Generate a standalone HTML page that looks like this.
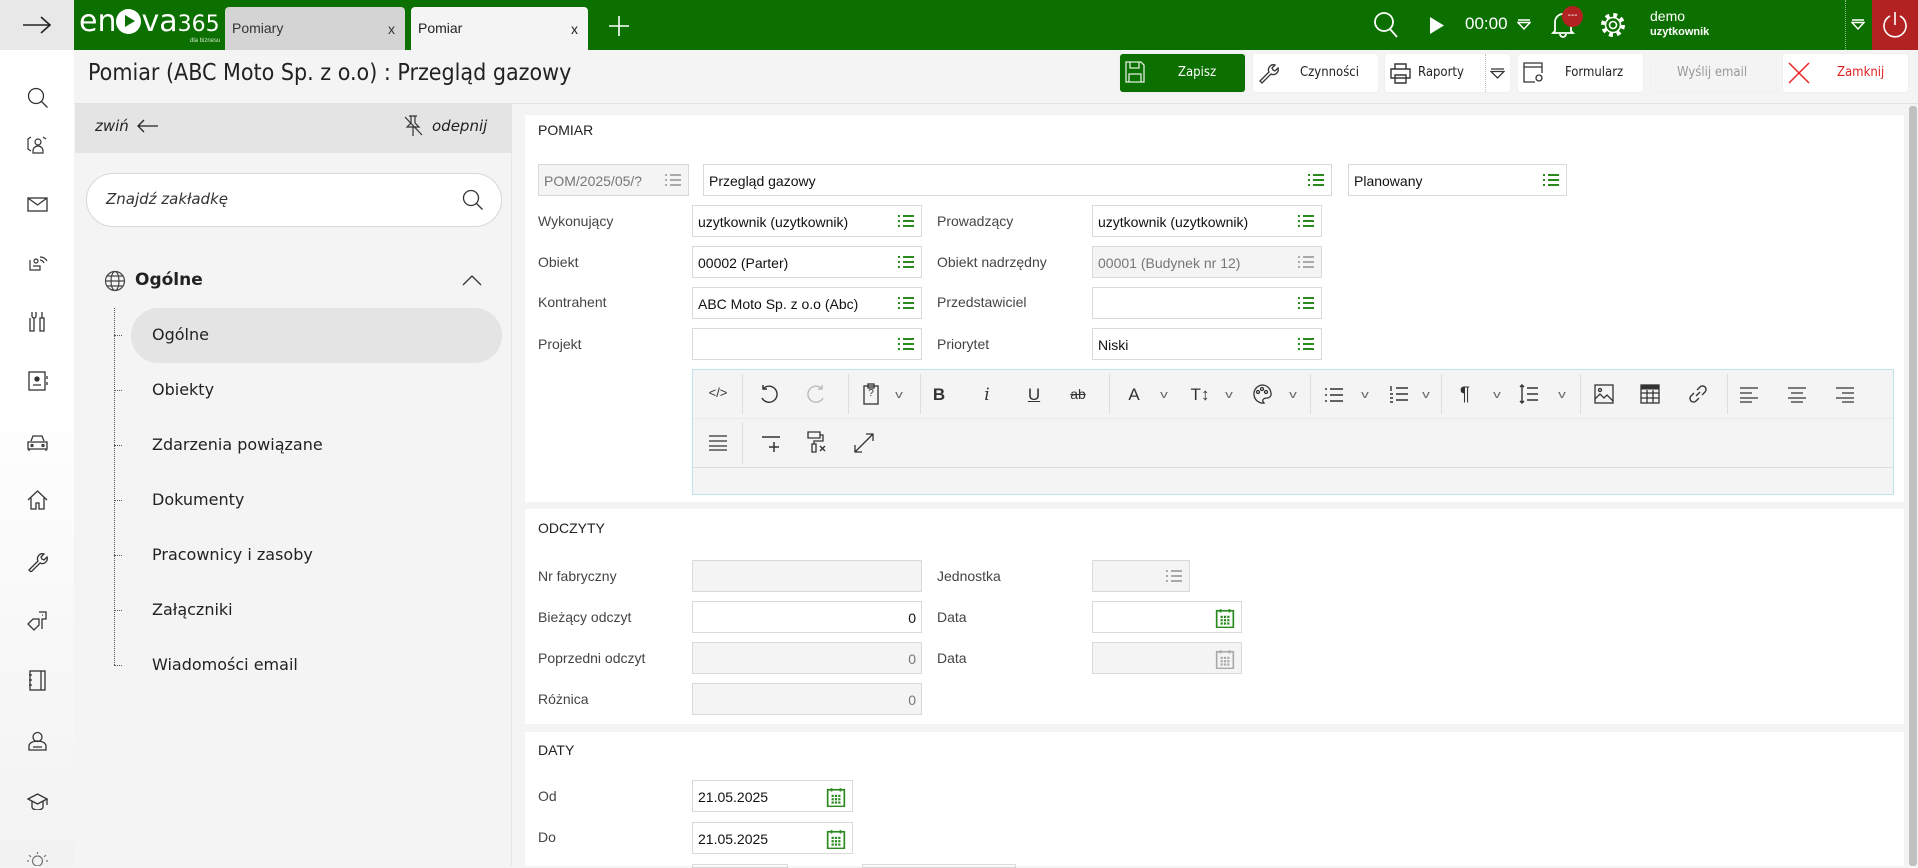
<!DOCTYPE html>
<html><head><meta charset="utf-8">
<style>
*{box-sizing:border-box;margin:0;padding:0}
body{width:1918px;height:866px;overflow:hidden;background:#f4f4f4;font-family:"Liberation Sans",sans-serif;position:relative;color:#222}
.a{position:absolute}
.hdr{left:0;top:0;width:1918px;height:50px;background:#0b7000}
.tab{top:7px;height:43px;border-radius:4px 4px 0 0;font-size:14px;padding:13px 0 0 7px}
.tab span{position:absolute;right:10px;top:14px;font-size:14px}
.btn{top:54px;height:38px;background:#fff;border-radius:3px;font-size:14px;box-shadow:0 0 2px rgba(0,0,0,.05)}
.btn .t{position:absolute;top:11px;font-family:"DejaVu Sans Condensed","Liberation Sans",sans-serif;font-size:13px}
.card{background:#fff;left:525px;width:1379px}
.lbl{font-size:14px;color:#444}
.f{height:32px;border:1px solid #d9d9d9;background:#fff;font-size:14px;padding:8px 5px;color:#111;white-space:nowrap}
.f.d{background:#f4f4f4;color:#777}
.li{position:absolute;right:6px;top:8px;width:18px;height:14px}
.nav{font-family:"DejaVu Sans","Liberation Sans",sans-serif;font-size:16px;color:#222}
.tb{position:absolute;font-size:17px;color:#333;transform:translateX(-50%)}
.sep{position:absolute;width:1px;background:#ddd}
.car{position:absolute;font-size:11px;color:#666;transform:translateX(-50%) scaleX(1.4)}
</style></head><body>
<svg width="0" height="0" style="position:absolute"><defs>
<symbol id="lst" viewBox="0 0 18 14"><g stroke-width="2"><path d="M1 2h2M1 7h2M1 12h2"/><path d="M6 2h11M6 7h11M6 12h11"/></g></symbol>
<symbol id="cal" viewBox="0 0 18 18"><rect x="1.5" y="2.5" width="15" height="15" fill="none" stroke-width="1.5"/><path d="M5 1v3M13 1v3" stroke-width="1.5"/><g stroke="none"><rect x="5" y="7" width="2" height="2"/><rect x="8" y="7" width="2" height="2"/><rect x="11" y="7" width="2" height="2"/><rect x="5" y="10" width="2" height="2"/><rect x="8" y="10" width="2" height="2"/><rect x="11" y="10" width="2" height="2"/><rect x="5" y="13" width="2" height="2"/><rect x="8" y="13" width="2" height="2"/><rect x="11" y="13" width="2" height="2"/></g></symbol>
</defs></svg>

<!-- header -->
<div class="a hdr"></div>
<div class="a" style="left:0;top:0;width:74px;height:50px;background:#e8e8e8"></div>
<svg class="a" style="left:22px;top:15px" width="30" height="20" viewBox="0 0 30 20"><path d="M1 10h27M19 2l9 8-9 8" fill="none" stroke="#222" stroke-width="1.6"/></svg>
<div class="a" style="left:79px;top:4px;color:#fff;font-size:30px;letter-spacing:0px;font-family:'DejaVu Sans',sans-serif">en<span style="display:inline-block;width:25px;height:25px;border-radius:50%;background:#fff;vertical-align:-3px;position:relative"><span style="position:absolute;left:9px;top:6px;border-left:10px solid #0b7000;border-top:6.5px solid transparent;border-bottom:6.5px solid transparent"></span></span>va<span style="font-size:22px">365</span></div>
<div class="a" style="left:190px;top:38px;color:#cfe6cc;font-size:6px">dla biznesu</div>
<div class="a tab" style="left:225px;width:180px;background:#d4d4d4;color:#333">Pomiary<span>x</span></div>
<div class="a tab" style="left:411px;width:177px;background:#f4f4f4;color:#222">Pomiar<span>x</span></div>
<svg class="a" style="left:609px;top:16px" width="20" height="20"><path d="M10 0v20M0 10h20" stroke="#fff" stroke-width="1.6"/></svg>
<svg class="a" style="left:1373px;top:11px" width="26" height="28"><circle cx="11" cy="11" r="9" fill="none" stroke="#fff" stroke-width="1.8"/><path d="M17 18l7 8" stroke="#fff" stroke-width="1.8"/></svg>
<svg class="a" style="left:1429px;top:17px" width="16" height="17"><path d="M1 0l14 8.5L1 17z" fill="#fff"/></svg>
<div class="a" style="left:1465px;top:14px;color:#fff;font-size:17px">00:00</div>
<svg class="a" style="left:1517px;top:19px" width="14" height="11"><path d="M1 1h12M1 3.5h12L7 10z" fill="none" stroke="#fff" stroke-width="1.4"/></svg>
<svg class="a" style="left:1551px;top:10px" width="24" height="28"><path d="M4 21V12a8 8 0 0 1 16 0v9l2 2H2zM9 24a3 3 0 0 0 6 0" fill="none" stroke="#fff" stroke-width="1.8"/></svg>
<div class="a" style="left:1562px;top:6px;width:21px;height:21px;border-radius:50%;background:#b22222;color:#fff;font-size:10px;text-align:center;line-height:19px">---</div>
<svg class="a" style="left:1600px;top:12px" width="26" height="26" viewBox="0 0 26 26"><circle cx="13" cy="13" r="10" fill="none" stroke="#fff" stroke-width="4" stroke-dasharray="3.9 3.95"/><circle cx="13" cy="13" r="7.5" fill="#0b7000" stroke="#fff" stroke-width="1.6"/><circle cx="13" cy="13" r="3.5" fill="none" stroke="#fff" stroke-width="1.6"/></svg>
<div class="a" style="left:1650px;top:8px;color:#fff;font-size:14px">demo</div>
<div class="a" style="left:1650px;top:26px;color:#fff;font-size:11px;font-weight:bold">uzytkownik</div>
<div class="a" style="left:1845px;top:0;height:50px;border-left:1px dotted #8bbf85"></div>
<svg class="a" style="left:1851px;top:19px" width="14" height="11"><path d="M1 1h12M1 3.5h12L7 10z" fill="none" stroke="#fff" stroke-width="1.4"/></svg>
<div class="a" style="left:1872px;top:0;width:46px;height:50px;background:#b22222"></div>
<svg class="a" style="left:1881px;top:10px" width="28" height="30"><path d="M9 6a11 11 0 1 0 10 0" fill="none" stroke="#fff" stroke-width="1.6"/><path d="M14 2v13" stroke="#fff" stroke-width="1.6"/></svg>

<!-- left icon bar -->
<div class="a" style="left:0;top:50px;width:74px;height:816px;background:linear-gradient(#fff 40%,#f2f2f2)"></div>
<svg class="a" style="left:26px;top:86px" width="24" height="24"><circle cx="10" cy="10" r="7.5" fill="none" stroke="#333" stroke-width="1.3"/><path d="M15.5 15.5l6 6" stroke="#333" stroke-width="1.3"/></svg>
<svg class="a" style="left:27px;top:134px" width="22" height="20" fill="none" stroke="#333" stroke-width="1.2"><path d="M4 3L1 5v10l3 2M11 5a3 3 0 1 1 0 6 3 3 0 1 1 0-6M6 19v-2a5 5 0 0 1 10 0v2zM16 3l3 2"/></svg>
<svg class="a" style="left:27px;top:197px" width="21" height="15" fill="none" stroke="#333" stroke-width="1.3"><rect x="1" y="1" width="19" height="13"/><path d="M1 1l9.5 7L20 1"/></svg>
<svg class="a" style="left:27px;top:252px" width="22" height="20" fill="none" stroke="#333" stroke-width="1.2"><path d="M13 5a8 8 0 0 1 7 4M13 8a5 5 0 0 1 4 3M3 8v10h10v-4H6M7 9a2 2 0 1 1 0 .1"/></svg>
<svg class="a" style="left:29px;top:311px" width="18" height="22" fill="none" stroke="#333" stroke-width="1.3"><path d="M3 1v4a2 2 0 0 0 4 0V1M5 7v13h-4V7M13 1v6M11 7h4v13h-4z"/></svg>
<svg class="a" style="left:28px;top:371px" width="20" height="20" fill="none" stroke="#333" stroke-width="1.3"><rect x="1" y="1" width="16" height="18"/><circle cx="9" cy="8" r="2" fill="#333"/><path d="M5 14h8M19 5v3M19 11v3"/></svg>
<svg class="a" style="left:27px;top:434px" width="21" height="17" fill="none" stroke="#333" stroke-width="1.3"><path d="M4 7l2-5h9l2 5M1 8h19v7H1zM2 15v2M19 15v2"/><circle cx="5" cy="11.5" r="1"/><circle cx="16" cy="11.5" r="1"/></svg>
<svg class="a" style="left:27px;top:490px" width="21" height="20" fill="none" stroke="#333" stroke-width="1.3"><path d="M1 10L10.5 1 20 10M4 8v11h5v-6h3v6h5V8"/></svg>
<svg class="a" style="left:27px;top:551px" width="21" height="21" fill="none" stroke="#333" stroke-width="1.3"><path d="M2 19l9-9a5 5 0 0 1 6-7l-3 3 1 2 2 1 3-3a5 5 0 0 1-7 6l-9 9z"/></svg>
<svg class="a" style="left:27px;top:610px" width="21" height="21" fill="none" stroke="#333" stroke-width="1.3"><path d="M1 14l5-5h6v6l-5 5zM12 2h7v7h-4v10M15 5h1"/></svg>
<svg class="a" style="left:29px;top:670px" width="17" height="21" fill="none" stroke="#333" stroke-width="1.3"><rect x="1" y="1" width="15" height="19"/><path d="M12 1v19M0 5h3M0 10h3M0 15h3"/></svg>
<svg class="a" style="left:28px;top:731px" width="19" height="20" fill="none" stroke="#333" stroke-width="1.3"><circle cx="9.5" cy="6" r="4.5"/><path d="M1 19v-4a8.5 5 0 0 1 17 0v4zM5 16h9"/></svg>
<svg class="a" style="left:27px;top:793px" width="21" height="17" fill="none" stroke="#333" stroke-width="1.3"><path d="M1 6L10.5 1 20 6l-9.5 5zM5 8v6a5.5 3 0 0 0 11 0V8M20 6v6"/></svg>
<svg class="a" style="left:27px;top:851px" width="21" height="15" fill="none" stroke="#777" stroke-width="1.2"><circle cx="10.5" cy="10" r="5"/><path d="M10.5 1v2M2 4l2 2M19 4l-2 2M0 10h2M19 10h2"/></svg>

<!-- title bar -->
<div class="a" style="left:74px;top:50px;width:1844px;height:54px;background:#f4f4f4;border-bottom:1px solid #e2e2e2"></div>
<div class="a" style="left:88px;top:60px;font-size:23px;color:#222;font-family:'DejaVu Sans Condensed','Liberation Sans',sans-serif">Pomiar (ABC Moto Sp. z o.o) : Przegląd gazowy</div>
<div class="a btn" style="left:1120px;width:125px;background:#0b7000"><svg class="a" style="left:5px;top:7px" width="20" height="22" fill="none" stroke="#dfeedd" stroke-width="1.3"><path d="M1 1h15l3 3v17H1zM5 1v6h9V1M4 21v-8h12v8"/></svg><span class="t" style="left:58px;color:#fff">Zapisz</span></div>
<div class="a btn" style="left:1253px;width:125px"><svg class="a" style="left:5px;top:8px" width="22" height="22" fill="none" stroke="#333" stroke-width="1.3"><path d="M2 19l9-9a5 5 0 0 1 6-7l-3 3 1 2 2 1 3-3a5 5 0 0 1-7 6l-9 9z"/></svg><span class="t" style="left:47px">Czynności</span></div>
<div class="a btn" style="left:1385px;width:125px"><svg class="a" style="left:5px;top:9px" width="21" height="21" fill="none" stroke="#333" stroke-width="1.4"><path d="M5 6V1h11v5M1 6h19v9H1zM5 12h11v8H5z"/></svg><span class="t" style="left:33px">Raporty</span><div class="a" style="left:100px;top:0;height:38px;border-left:1px dotted #bbb"></div><svg class="a" style="left:105px;top:14px" width="15" height="11"><path d="M1 1h13M1 3.5h13L7.5 10z" fill="none" stroke="#333" stroke-width="1.3"/></svg></div>
<div class="a btn" style="left:1518px;width:125px"><svg class="a" style="left:5px;top:8px" width="22" height="22" fill="none" stroke="#333" stroke-width="1.3"><path d="M12 20H1V1h18v10M1 5h18"/><circle cx="16" cy="16" r="3"/></svg><span class="t" style="left:47px">Formularz</span></div>
<div class="a btn" style="left:1651px;width:125px;background:#f4f4f4"><span class="t" style="left:26px;color:#999">Wyślij email</span></div>
<div class="a btn" style="left:1783px;width:125px"><svg class="a" style="left:4px;top:7px" width="24" height="24"><path d="M2 2l20 20M22 2L2 22" stroke="#e22" stroke-width="1.5"/></svg><span class="t" style="left:54px;color:#e02020">Zamknij</span></div>

<!-- tab navigator -->
<div class="a" style="left:75px;top:104px;width:437px;height:762px;background:#f4f4f4;border-right:1px solid #e6e6e6"></div>
<div class="a" style="left:75px;top:104px;width:437px;height:49px;background:#e4e4e4"></div>
<div class="a nav" style="left:95px;top:117px;font-style:italic;font-size:15px">zwiń</div>
<svg class="a" style="left:137px;top:119px" width="22" height="14"><path d="M21 7H1M7 1L1 7l6 6" fill="none" stroke="#222" stroke-width="1.3"/></svg>
<svg class="a" style="left:403px;top:115px" width="20" height="22" fill="none" stroke="#333" stroke-width="1.2"><path d="M6 1h8M8 1v7l-4 4h12l-4-4V1M10 12v9M2 2l17 18"/></svg>
<div class="a nav" style="left:432px;top:117px;font-style:italic;font-size:15px">odepnij</div>
<div class="a" style="left:86px;top:173px;width:416px;height:54px;border:1px solid #d8d8d8;border-radius:27px;background:#fff"></div>
<div class="a nav" style="left:106px;top:190px;font-style:italic;font-size:15px;color:#333">Znajdź zakładkę</div>
<svg class="a" style="left:462px;top:189px" width="22" height="22"><circle cx="9" cy="9" r="7.5" fill="none" stroke="#333" stroke-width="1.3"/><path d="M14.5 14.5l6 6" stroke="#333" stroke-width="1.3"/></svg>
<svg class="a" style="left:104px;top:270px" width="22" height="22" fill="none" stroke="#444" stroke-width="1.2"><circle cx="11" cy="11" r="9.5"/><ellipse cx="11" cy="11" rx="4" ry="9.5"/><path d="M1.5 11h19M3 6h16M3 16h16"/></svg>
<div class="a nav" style="left:135px;top:270px;font-weight:bold;font-size:17px">Ogólne</div>
<svg class="a" style="left:462px;top:274px" width="20" height="12"><path d="M1 11l9-9 9 9" fill="none" stroke="#333" stroke-width="1.3"/></svg>
<div class="a" style="left:114px;top:308px;height:357px;border-left:1px dotted #555"></div>
<div class="a" style="left:131px;top:308px;width:371px;height:55px;background:#e4e4e4;border-radius:28px"></div>
<div class="a" style="left:114px;top:335px;width:8px;border-top:1px dotted #555"></div>
<div class="a" style="left:114px;top:390px;width:8px;border-top:1px dotted #555"></div>
<div class="a" style="left:114px;top:445px;width:8px;border-top:1px dotted #555"></div>
<div class="a" style="left:114px;top:500px;width:8px;border-top:1px dotted #555"></div>
<div class="a" style="left:114px;top:555px;width:8px;border-top:1px dotted #555"></div>
<div class="a" style="left:114px;top:610px;width:8px;border-top:1px dotted #555"></div>
<div class="a" style="left:114px;top:665px;width:8px;border-top:1px dotted #555"></div>
<div class="a nav" style="left:152px;top:325px">Ogólne</div>
<div class="a nav" style="left:152px;top:380px">Obiekty</div>
<div class="a nav" style="left:152px;top:435px">Zdarzenia powiązane</div>
<div class="a nav" style="left:152px;top:490px">Dokumenty</div>
<div class="a nav" style="left:152px;top:545px">Pracownicy i zasoby</div>
<div class="a nav" style="left:152px;top:600px">Załączniki</div>
<div class="a nav" style="left:152px;top:655px">Wiadomości email</div>

<!-- scrollbar -->
<div class="a" style="left:1908px;top:104px;width:10px;height:762px;background:#f4f4f4"></div>
<div class="a" style="left:1909px;top:106px;width:8px;height:760px;background:#c1c1c1;border-radius:3px"></div>

<!-- POMIAR card -->
<div class="a card" style="top:115px;height:387px"></div>
<div class="a" style="left:538px;top:122px;font-size:14px">POMIAR</div>
<div class="a f d" style="left:538px;top:164px;width:151px">POM/2025/05/?<svg class="li" stroke="#aaa"><use href="#lst"/></svg></div>
<div class="a f" style="left:703px;top:164px;width:629px">Przegląd gazowy<svg class="li" stroke="#2a8a1e"><use href="#lst"/></svg></div>
<div class="a f" style="left:1348px;top:164px;width:219px">Planowany<svg class="li" stroke="#2a8a1e"><use href="#lst"/></svg></div>

<div class="a lbl" style="left:538px;top:213px">Wykonujący</div>
<div class="a f" style="left:692px;top:205px;width:230px">uzytkownik (uzytkownik)<svg class="li" stroke="#2a8a1e"><use href="#lst"/></svg></div>
<div class="a lbl" style="left:937px;top:213px">Prowadzący</div>
<div class="a f" style="left:1092px;top:205px;width:230px">uzytkownik (uzytkownik)<svg class="li" stroke="#2a8a1e"><use href="#lst"/></svg></div>

<div class="a lbl" style="left:538px;top:254px">Obiekt</div>
<div class="a f" style="left:692px;top:246px;width:230px">00002 (Parter)<svg class="li" stroke="#2a8a1e"><use href="#lst"/></svg></div>
<div class="a lbl" style="left:937px;top:254px">Obiekt nadrzędny</div>
<div class="a f d" style="left:1092px;top:246px;width:230px">00001 (Budynek nr 12)<svg class="li" stroke="#aaa"><use href="#lst"/></svg></div>

<div class="a lbl" style="left:538px;top:294px">Kontrahent</div>
<div class="a f" style="left:692px;top:287px;width:230px">ABC Moto Sp. z o.o (Abc)<svg class="li" stroke="#2a8a1e"><use href="#lst"/></svg></div>
<div class="a lbl" style="left:937px;top:294px">Przedstawiciel</div>
<div class="a f" style="left:1092px;top:287px;width:230px"><svg class="li" stroke="#2a8a1e"><use href="#lst"/></svg></div>

<div class="a lbl" style="left:538px;top:336px">Projekt</div>
<div class="a f" style="left:692px;top:328px;width:230px"><svg class="li" stroke="#2a8a1e"><use href="#lst"/></svg></div>
<div class="a lbl" style="left:937px;top:336px">Priorytet</div>
<div class="a f" style="left:1092px;top:328px;width:230px">Niski<svg class="li" stroke="#2a8a1e"><use href="#lst"/></svg></div>

<!-- editor -->
<div class="a" style="left:692px;top:369px;width:1202px;height:126px;border:1px solid #bfe3ea;background:#f4f4f4"></div>
<div class="a" style="left:693px;top:418px;width:1200px;border-top:1px solid #eaeaea"></div>
<div class="a" style="left:693px;top:467px;width:1200px;border-top:1px solid #ddd"></div>
<div class="sep" style="left:742px;top:374px;height:40px"></div>
<div class="sep" style="left:848px;top:374px;height:40px"></div>
<div class="sep" style="left:920px;top:374px;height:40px"></div>
<div class="sep" style="left:1109px;top:374px;height:40px"></div>
<div class="sep" style="left:1310px;top:374px;height:40px"></div>
<div class="sep" style="left:1441px;top:374px;height:40px"></div>
<div class="sep" style="left:1580px;top:374px;height:40px"></div>
<div class="sep" style="left:1727px;top:374px;height:40px"></div>
<div class="sep" style="left:742px;top:422px;height:42px"></div>
<div class="tb" style="left:718px;top:385px;font-size:13px">&lt;/&gt;</div>
<svg class="a" style="left:758px;top:384px" width="20" height="20" fill="none" stroke="#333" stroke-width="1.4"><path d="M5 5a8 8 0 1 1 -1 9M5 1v4h4"/></svg>
<svg class="a" style="left:807px;top:384px" width="20" height="20" fill="none" stroke="#bbb" stroke-width="1.4"><path d="M15 5a8 8 0 1 0 1 9M15 1v4h-4"/></svg>
<svg class="a" style="left:863px;top:383px" width="16" height="22" fill="none" stroke="#333" stroke-width="1.3"><rect x="1" y="3" width="14" height="18"/><rect x="5" y="1" width="6" height="4"/></svg>
<div class="tb" style="left:871px;top:388px;font-size:10px">?</div>
<div class="car" style="left:899px;top:389px">v</div>
<div class="tb" style="left:939px;top:385px;font-weight:bold">B</div>
<div class="tb" style="left:987px;top:385px;font-style:italic;font-family:'DejaVu Serif',serif">i</div>
<div class="tb" style="left:1034px;top:385px;text-decoration:underline">U</div>
<div class="tb" style="left:1078px;top:386px;font-size:14px;text-decoration:line-through">ab</div>
<div class="tb" style="left:1134px;top:385px">A</div>
<div class="car" style="left:1164px;top:389px">v</div>
<div class="tb" style="left:1200px;top:385px">T↕</div>
<div class="car" style="left:1229px;top:389px">v</div>
<svg class="a" style="left:1252px;top:384px" width="20" height="20" fill="none" stroke="#333" stroke-width="1.3"><path d="M10 1a9 9 0 1 0 2 18c-3-3 0-5 3-5a4 4 0 0 0 4-5 9 9 0 0 0-9-8z"/><circle cx="6" cy="8" r="1.5"/><circle cx="10" cy="5" r="1.5"/><circle cx="14" cy="8" r="1.5"/></svg>
<div class="car" style="left:1293px;top:389px">v</div>
<svg class="a" style="left:1324px;top:387px" width="20" height="16" stroke="#333" stroke-width="1.4"><path d="M1 2h2M1 8h2M1 14h2M6 2h13M6 8h13M6 14h13"/></svg>
<div class="car" style="left:1365px;top:389px">v</div>
<svg class="a" style="left:1389px;top:385px" width="20" height="18" stroke="#333" stroke-width="1.4"><path d="M2 1v5M1 9h3M1 13h3M1 17h3M7 3h12M7 9h12M7 15h12"/></svg>
<div class="car" style="left:1426px;top:389px">v</div>
<div class="tb" style="left:1465px;top:384px;font-size:19px">¶</div>
<div class="car" style="left:1497px;top:389px">v</div>
<svg class="a" style="left:1519px;top:384px" width="20" height="20" stroke="#333" stroke-width="1.4" fill="none"><path d="M3 1v18M1 3l2-2 2 2M1 17l2 2 2-2M8 4h11M8 10h11M8 16h11"/></svg>
<div class="car" style="left:1562px;top:389px">v</div>
<svg class="a" style="left:1594px;top:384px" width="20" height="20" fill="none" stroke="#333" stroke-width="1.3"><rect x="1" y="1" width="18" height="18"/><path d="M1 15l5-5 4 4 3-3 6 6"/><circle cx="6" cy="6" r="1.5"/></svg>
<svg class="a" style="left:1640px;top:384px" width="20" height="20" fill="none" stroke="#333" stroke-width="1.3"><rect x="1" y="1" width="18" height="18"/><path d="M1 3.5h18" stroke-width="4"/><path d="M1 9h18M1 14h18M7 6v13M13 6v13"/></svg>
<svg class="a" style="left:1688px;top:384px" width="20" height="20" fill="none" stroke="#333" stroke-width="1.4"><path d="M8 12l4-4M9 6l3-3a3 3 0 0 1 5 5l-3 3M11 14l-3 3a3 3 0 0 1-5-5l3-3"/></svg>
<svg class="a" style="left:1739px;top:387px" width="20" height="16" stroke="#333" stroke-width="1.3"><path d="M1 1h18M1 6h12M1 11h18M1 15h12"/></svg>
<svg class="a" style="left:1787px;top:387px" width="20" height="16" stroke="#333" stroke-width="1.3"><path d="M1 1h18M4 6h12M1 11h18M4 15h12"/></svg>
<svg class="a" style="left:1835px;top:387px" width="20" height="16" stroke="#333" stroke-width="1.3"><path d="M1 1h18M7 6h12M1 11h18M7 15h12"/></svg>
<svg class="a" style="left:708px;top:435px" width="20" height="16" stroke="#333" stroke-width="1.3"><path d="M1 1h18M1 6h18M1 11h18M1 15h18"/></svg>
<svg class="a" style="left:761px;top:434px" width="20" height="20" stroke="#333" stroke-width="1.5"><path d="M1 3h18M13 8v10M8 13h10"/></svg>
<svg class="a" style="left:806px;top:431px" width="22" height="22" fill="none" stroke="#333" stroke-width="1.3"><path d="M2 1h12v6H2zM14 4h3v6H8v3M6 13h4v8H6zM14 15l5 5M19 15l-5 5"/></svg>
<svg class="a" style="left:853px;top:432px" width="22" height="22" fill="none" stroke="#333" stroke-width="1.3"><path d="M2 20L20 2M13 2h7v7M2 13v7h7"/></svg>

<!-- ODCZYTY card -->
<div class="a card" style="top:509px;height:215px"></div>
<div class="a" style="left:538px;top:520px;font-size:14px">ODCZYTY</div>
<div class="a lbl" style="left:538px;top:568px">Nr fabryczny</div>
<div class="a f d" style="left:692px;top:560px;width:230px"></div>
<div class="a lbl" style="left:937px;top:568px">Jednostka</div>
<div class="a f d" style="left:1092px;top:560px;width:98px"><svg class="li" stroke="#aaa"><use href="#lst"/></svg></div>
<div class="a lbl" style="left:538px;top:609px">Bieżący odczyt</div>
<div class="a f" style="left:692px;top:601px;width:230px;text-align:right">0</div>
<div class="a lbl" style="left:937px;top:609px">Data</div>
<div class="a f" style="left:1092px;top:601px;width:150px"><svg style="right:6px;top:6px;position:absolute" width="20" height="20" viewBox="0 0 18 18" stroke="#2a8a1e" fill="#2a8a1e"><use href="#cal"/></svg></div>
<div class="a lbl" style="left:538px;top:650px">Poprzedni odczyt</div>
<div class="a f d" style="left:692px;top:642px;width:230px;text-align:right">0</div>
<div class="a lbl" style="left:937px;top:650px">Data</div>
<div class="a f d" style="left:1092px;top:642px;width:150px"><svg style="right:6px;top:6px;position:absolute" width="20" height="20" viewBox="0 0 18 18" stroke="#aaa" fill="#aaa"><use href="#cal"/></svg></div>
<div class="a lbl" style="left:538px;top:691px">Różnica</div>
<div class="a f d" style="left:692px;top:683px;width:230px;text-align:right">0</div>

<!-- DATY card -->
<div class="a card" style="top:732px;height:134px"></div>
<div class="a" style="left:538px;top:742px;font-size:14px">DATY</div>
<div class="a lbl" style="left:538px;top:788px">Od</div>
<div class="a f" style="left:692px;top:780px;width:161px">21.05.2025<svg style="right:6px;top:6px;position:absolute" width="20" height="20" viewBox="0 0 18 18" stroke="#2a8a1e" fill="#2a8a1e"><use href="#cal"/></svg></div>
<div class="a lbl" style="left:538px;top:829px">Do</div>
<div class="a f" style="left:692px;top:822px;width:161px">21.05.2025<svg style="right:6px;top:6px;position:absolute" width="20" height="20" viewBox="0 0 18 18" stroke="#2a8a1e" fill="#2a8a1e"><use href="#cal"/></svg></div>
<div class="a" style="left:692px;top:864px;width:96px;height:4px;border:1px solid #d9d9d9"></div>
<div class="a" style="left:862px;top:864px;width:154px;height:4px;border:1px solid #d9d9d9"></div>
</body></html>
